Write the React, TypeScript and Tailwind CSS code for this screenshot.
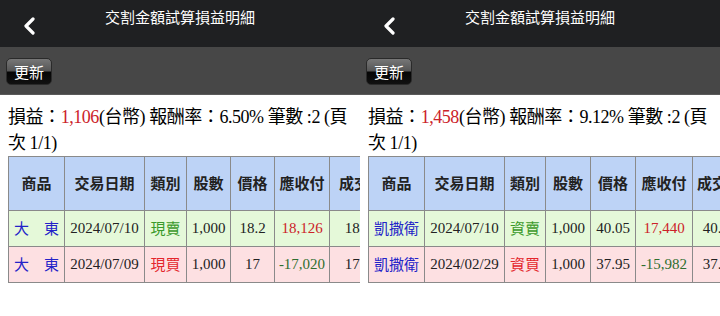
import React from 'react';

interface Trade {
  name: string;
  date: string;
  kind: string;
  shares: string;
  price: string;
  amount: string;
  deal: string;
}

interface PanelProps {
  profit: string;
  rate: string;
  cols: string[];
  rows: Trade[];
}

const cjk = { fontFamily: '"Liberation Serif", "Noto Sans CJK TC", serif' };
const sans = { fontFamily: '"Noto Sans CJK TC", "Noto Sans", sans-serif' };

const BackIcon = () => (
  <svg width="14" height="18" viewBox="0 0 14 18" fill="none">
    <path d="M11 2 L4 9 L11 16" stroke="white" strokeWidth="3.2" strokeLinecap="round" strokeLinejoin="round" />
  </svg>
);

const headers = ['商品', '交易日期', '類別', '股數', '價格', '應收付', '成交價'];

const Panel: React.FC<PanelProps> = ({ profit, rate, cols, rows }) => {
  return (
    <div className="w-[360px] h-[316px] overflow-hidden flex flex-col bg-white shrink-0">
      <div className="h-[47px] bg-[#1f2022] grid grid-cols-[60px_1fr_60px] shrink-0">
        <div className="flex items-start pt-[17px] pl-[22px]">
          <BackIcon />
        </div>
        <div className="text-white text-[15px] leading-[20px] pt-[7px] text-center" style={sans}>
          交割金額試算損益明細
        </div>
        <div />
      </div>
      <div className="h-[48px] bg-[#474747] border-b border-[#5a5a5a] shrink-0 pl-[6px] pt-[11px]">
        <button
          className="w-[46px] h-[27px] rounded-[5px] border border-[#2a2a2a] text-white text-[15px] leading-[24px] bg-[linear-gradient(to_bottom,#777_0%,#555_48%,#050505_52%,#111_100%)]"
          style={sans}
        >
          更新
        </button>
      </div>
      <div className="pl-2 pr-2 pt-[9px]">
        <p className="text-[18px] leading-[26px] text-black whitespace-nowrap tracking-[-0.45px]" style={cjk}>
          損益：<span className="text-[#cc2229]">{profit}</span>(台幣) 報酬率：{rate} 筆數 :2 (頁
          <br />
          次 1/1)
        </p>
        <table className="table-fixed border-collapse w-max">
          <colgroup>
            {cols.map((c, i) => (
              <col key={i} className={c} />
            ))}
          </colgroup>
          <thead>
            <tr className="bg-[#bdd3f6] h-[54px]">
              {headers.map(h => (
                <th key={h} className="border border-[#8a8a8a] text-[15px] font-bold text-[#222] whitespace-nowrap px-1" style={sans}>
                  {h}
                </th>
              ))}
            </tr>
          </thead>
          <tbody>
            {rows.map((r, i) => (
              <tr key={i} className={i === 0 ? 'bg-[#e5f9d9] h-[36px]' : 'bg-[#fde0e2] h-[36px]'}>
                <td className="border border-[#8a8a8a] text-[15px] text-[#2323c8] text-center whitespace-nowrap" style={sans}>{r.name}</td>
                <td className="border border-[#8a8a8a] text-[15px] text-[#222] text-center whitespace-nowrap" style={cjk}>{r.date}</td>
                <td className={i === 0 ? 'border border-[#8a8a8a] text-[15px] text-[#3a9a2a] text-center whitespace-nowrap' : 'border border-[#8a8a8a] text-[15px] text-[#e4262c] text-center whitespace-nowrap'} style={sans}>{r.kind}</td>
                <td className="border border-[#8a8a8a] text-[15px] text-[#222] text-center whitespace-nowrap" style={cjk}>{r.shares}</td>
                <td className="border border-[#8a8a8a] text-[15px] text-[#222] text-center whitespace-nowrap" style={cjk}>{r.price}</td>
                <td className={i === 0 ? 'border border-[#8a8a8a] text-[15px] text-[#cc2229] text-center whitespace-nowrap' : 'border border-[#8a8a8a] text-[15px] text-[#2f6e2f] text-center whitespace-nowrap'} style={cjk}>{r.amount}</td>
                <td className="border border-[#8a8a8a] text-[15px] text-[#222] text-center whitespace-nowrap" style={cjk}>{r.deal}</td>
              </tr>
            ))}
          </tbody>
        </table>
      </div>
    </div>
  );
};

export default function App() {
  return (
    <div className="flex w-[720px] h-[316px] bg-white overflow-hidden">
      <Panel
        profit="1,106"
        rate="6.50%"
        cols={['w-[56px]', 'w-[80px]', 'w-[42px]', 'w-[44px]', 'w-[44px]', 'w-[55px]', 'w-[64px]']}
        rows={[
          { name: '大　東', date: '2024/07/10', kind: '現賣', shares: '1,000', price: '18.2', amount: '18,126', deal: '18.20' },
          { name: '大　東', date: '2024/07/09', kind: '現買', shares: '1,000', price: '17', amount: '-17,020', deal: '17.00' },
        ]}
      />
      <Panel
        profit="1,458"
        rate="9.12%"
        cols={['w-[56px]', 'w-[80px]', 'w-[41px]', 'w-[45px]', 'w-[45px]', 'w-[57px]', 'w-[46px]']}
        rows={[
          { name: '凱撒衛', date: '2024/07/10', kind: '資賣', shares: '1,000', price: '40.05', amount: '17,440', deal: '40.05' },
          { name: '凱撒衛', date: '2024/02/29', kind: '資買', shares: '1,000', price: '37.95', amount: '-15,982', deal: '37.95' },
        ]}
      />
    </div>
  );
}
